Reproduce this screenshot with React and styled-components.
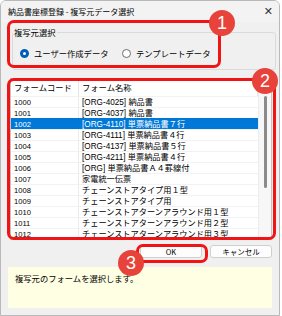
import React from "react"
import styled, { createGlobalStyle } from "styled-components"

const Global = createGlobalStyle`
	html, body {
		margin: 0;
		padding: 0;
		background: #ffffff;
	}
	body {
		font-family: "Liberation Sans", "Noto Sans CJK JP", sans-serif;
		color: #000;
	}
`

const Window = styled.div`
	position: relative;
	box-sizing: border-box;
	width: 280px;
	height: 316px;
	background: #f0f0f0;
	border: 1px solid #b9b9b9;
	border-radius: 6px 6px 0 0;
	overflow: hidden;
	display: flex;
	flex-direction: column;
`
const TitleBar = styled.div`
	height: 21px;
	display: flex;
	align-items: center;
	justify-content: space-between;
	padding: 0 6px 0 7px;
	background: #f3f3f3;
	font-size: 8px;
	font-family: "Noto Sans CJK JP", sans-serif;
`
const Close = styled.span`
	font-size: 11px;
	color: #333;
	font-family: "DejaVu Sans", sans-serif;
`
const Group = styled.fieldset`
	margin: 5px 3px 0 11px;
	padding: 0;
	border: 1px solid #dadada;
	border-radius: 3px;
	height: 43px;
	box-sizing: border-box;
	legend {
		padding: 0 1px;
		margin-left: 0;
		font-size: 8.3px;
		line-height: 10px;
		font-family: "Noto Sans CJK JP", sans-serif;
	}
`
const RadioRow = styled.div`
	height: 32px;
	display: flex;
	align-items: center;
	padding-left: 7px;
	gap: 0;
`
const Radio = styled.label`
	display: flex;
	align-items: center;
	gap: 5px;
	width: ${p => p.w}px;
	font-size: 8.3px;
	font-family: "Noto Sans CJK JP", sans-serif;
`
const Dot = styled.span`
	width: 9px;
	height: 9px;
	box-sizing: border-box;
	border-radius: 50%;
	border: ${p => (p.on ? "3px solid #005fb8" : "1px solid #6c6c6c")};
	background: #fff;
`
const ListView = styled.div`
	margin: 8px 0 0 9px;
	width: 262px;
	height: 162px;
	box-sizing: border-box;
	border: 1px solid #c4c4c4;
	background: #fff;
	display: flex;
	overflow: hidden;
`
const Table = styled.div`
	flex: 1;
	display: flex;
	flex-direction: column;
`
const Header = styled.div`
	display: grid;
	grid-template-columns: 68px 1fr;
	height: 17px;
	align-items: center;
	font-size: 8.3px;
	font-family: "Noto Sans CJK JP", sans-serif;
	span {
		padding-left: 3px;
		border-right: 1px solid #e5e5e5;
		line-height: 17px;
	}
`
const Row = styled.div`
	display: grid;
	grid-template-columns: 68px 1fr;
	height: 11px;
	line-height: 11px;
	font-size: 8.2px;
	background: ${p => (p.sel ? "#0078d7" : "#fff")};
	color: ${p => (p.sel ? "#fff" : "#000")};
	border-top: 1px solid ${p => (p.sel ? "#0078d7" : "#f2f2f2")};
	box-sizing: border-box;
	white-space: nowrap;
	span {
		padding-left: 3px;
	}
	span:first-child {
		border-right: 1px solid ${p => (p.sel ? "#0078d7" : "#ececec")};
		font-size: 7.6px;
	}
`
const ScrollTrack = styled.div`
	width: 12px;
	background: #f7f7f7;
	border-left: 1px solid #ececec;
	display: flex;
	justify-content: center;
	padding-top: 17px;
`
const Thumb = styled.div`
	width: 3px;
	height: 92px;
	border-radius: 2px;
	background: #8b8b8b;
`
const ButtonRow = styled.div`
	display: flex;
	justify-content: flex-end;
	gap: 8px;
	margin: 5px 7px 0 0;
`
const Button = styled.div`
	width: 62px;
	height: 13px;
	box-sizing: border-box;
	border: 1px solid #cfcfcf;
	border-radius: 3px;
	background: #fdfdfd;
	font-size: 7.5px;
	font-family: "Noto Sans CJK JP", sans-serif;
	display: flex;
	align-items: center;
	justify-content: center;
`
const Status = styled.div`
	margin: 9px 7px 0 7px;
	height: 41px;
	background: #ffffe3;
	padding: 5px 7px;
	box-sizing: border-box;
	font-size: 8.3px;
	font-family: "Noto Sans CJK JP", sans-serif;
`
const Mark = styled.div`
	position: absolute;
	left: ${p => p.x}px;
	top: ${p => p.y}px;
	width: ${p => p.w}px;
	height: ${p => p.h}px;
	box-sizing: border-box;
	border: 3px solid #f01414;
	border-radius: 7px;
`
const Badge = styled.div`
	position: absolute;
	left: ${p => p.x - 13}px;
	top: ${p => p.y - 13}px;
	width: 26px;
	height: 26px;
	border-radius: 50%;
	background: #e8433b;
	color: #fff;
	font-size: 18px;
	font-family: "Liberation Sans", sans-serif;
	display: flex;
	align-items: center;
	justify-content: center;
`

const rows = [
	["1000", "[ORG-4025] 納品書"],
	["1001", "[ORG-4037] 納品書"],
	["1002", "[ORG-4110] 単票納品書７行"],
	["1003", "[ORG-4111] 単票納品書４行"],
	["1004", "[ORG-4137] 単票納品書５行"],
	["1005", "[ORG-4211] 単票納品書４行"],
	["1006", "[ORG] 単票納品書Ａ４罫線付"],
	["1007", "家電統一伝票"],
	["1008", "チェーンストアタイプ用１型"],
	["1009", "チェーンストアタイプ用"],
	["1010", "チェーンストアターンアラウンド用１型"],
	["1011", "チェーンストアターンアラウンド用２型"],
	["1012", "チェーンストアターンアラウンド用３型"],
]

export default function App() {
	return (
		<>
			<Global />
			<Window>
				<TitleBar>
					<span>納品書座標登録 - 複写元データ選択</span>
					<Close>✕</Close>
				</TitleBar>
				<Group>
					<legend>複写元選択</legend>
					<RadioRow>
						<Radio w={102}>
							<Dot on />
							ユーザー作成データ
						</Radio>
						<Radio w={100}>
							<Dot />
							テンプレートデータ
						</Radio>
					</RadioRow>
				</Group>
				<ListView>
					<Table>
						<Header>
							<span>フォームコード</span>
							<span>フォーム名称</span>
						</Header>
						{rows.map(([code, name]) => (
							<Row key={code} sel={code === "1002"}>
								<span>{code}</span>
								<span>{name}</span>
							</Row>
						))}
					</Table>
					<ScrollTrack>
						<Thumb />
					</ScrollTrack>
				</ListView>
				<ButtonRow>
					<Button>OK</Button>
					<Button>キャンセル</Button>
				</ButtonRow>
				<Status>複写元のフォームを選択します。</Status>

				<Mark x={6} y={19} w={214} h={48} />
				<Mark x={6} y={77} w={269} h={162} />
				<Mark x={135} y={243} w={72} h={19} />
				<Badge x={221} y={22}>1</Badge>
				<Badge x={264} y={80}>2</Badge>
				<Badge x={130} y={262}>3</Badge>
			</Window>
		</>
	)
}
